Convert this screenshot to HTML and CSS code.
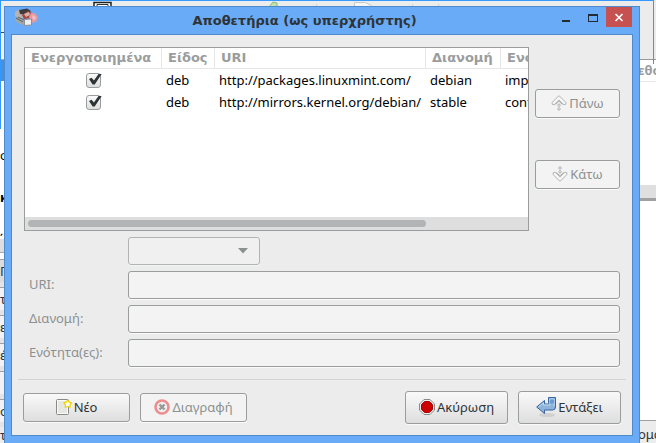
FILE: index.html
```html
<!DOCTYPE html>
<html lang="el">
<head>
<meta charset="utf-8">
<title>Αποθετήρια</title>
<link rel="stylesheet" href="styles.css">
</head>
<body>
<div class="backdrop" aria-hidden="true">
  <div class="back-left">
    <div class="bl-tools"></div>
    <div class="bl-line"></div>
    <div class="bl-selected"></div>
    <div class="bl-list"><span>ς</span><b>κ</b><span>΄</span></div>
    <div class="bl-scroll"></div>
    <div class="bl-tab bl-dark">Π</div>
    <div class="bl-tab">τ</div>
    <div class="bl-tab">ε</div>
    <div class="bl-tab">έ</div>
    <div class="bl-tab"></div>
    <div class="bl-tab">ο</div>
    <div class="bl-foot">τ</div>
  </div>
  <div class="back-right">
    <div class="br-tools"></div>
    <div class="br-head">εθο</div>
    <div class="br-list"></div>
    <div class="br-scroll"></div>
    <div class="br-text"></div>
    <div class="br-foot">ομά</div>
  </div>
  <svg class="back-icons" width="656" height="8" viewBox="0 0 656 8">
    <path d="M94 7V2.500h17V7" fill="#fff" stroke="#222" stroke-width="1.500"/>
    <path d="M97 6V4.500h11V6" fill="none" stroke="#333"/>
    <path d="M269 7l4-5 4 1v4z" fill="#bfe3ab" stroke="#8cba78"/>
    <path d="M354.500 7V2.500h11l6 3V7" fill="#f6f6f6" stroke="#c8c8c8"/>
    <path d="M316.500 4v3M438.500 4v3M412.500 4v3" stroke="#d4d4d4"/>
  </svg>
  <div class="back-frame"></div>
</div>

<main class="dialog">
  <header class="titlebar">
    <svg class="app-icon" width="26" height="20" viewBox="0 0 26 20">
      <defs><filter id="soft"><feGaussianBlur stdDeviation="0.6"/></filter></defs>
      <g filter="url(#soft)">
        <path d="M1 4l4-2.500 5 1.500 1 5-4 3-6-3z" fill="#b9b2ae"/>
        <path d="M5 2l8-1.500 4 2.500-4 4-7-1z" fill="#3e3b3d"/>
        <path d="M8 7l6-4 4 2-1 5-7 1z" fill="#a8453f"/>
        <path d="M10 6l5-2 1 3-4 2z" fill="#d8b2ac"/>
        <path d="M1 9l5 1 6 4-2 3-6-2-3-3z" fill="#a4a7a8"/>
        <path d="M2 10l7 4M4 9l6 3" stroke="#5e5f60"/>
        <path d="M17 5l4 0 3 4-2 5-5 1-2-6z" fill="#e39aa2"/>
        <path d="M18 7l3 1 1 3-3 1z" fill="#f3bfc4"/>
        <path d="M10.500 11.500l7-.5v6l-7 .5z" fill="#efefed" stroke="#8b9197"/>
      </g>
    </svg>
    <h1>Αποθετήρια (ως υπερχρήστης)</h1>
    <div class="win-buttons">
      <button type="button" aria-label="Ελαχιστοποίηση"><svg width="26" height="20" viewBox="0 0 26 20"><path d="M8 13h8v2H8z" fill="#222b30"/></svg></button>
      <button type="button" aria-label="Μεγιστοποίηση"><svg width="26" height="20" viewBox="0 0 26 20"><path d="M8 7h10v8H8zM9 9v5h8V9z" fill="#222b30" fill-rule="evenodd"/></svg></button>
      <button type="button" class="close" aria-label="Κλείσιμο"><svg width="26" height="20" viewBox="0 0 26 20"><path d="M9.500 7l7 7M16.500 7l-7 7" stroke="#fff" stroke-width="1.700"/></svg></button>
    </div>
  </header>

  <div class="content">
    <section class="sources">
      <div class="list-frame">
        <div class="list-view">
          <table>
            <thead><tr><th class="c-on">Ενεργοποιημένα</th><th class="c-kind">Είδος</th><th class="c-uri">URI</th><th class="c-dist">Διανομή</th><th class="c-sect">Ενότητα(ες)</th></tr></thead>
            <tbody>
              <tr><td class="center"><input type="checkbox" checked aria-label="packages.linuxmint.com"></td><td>deb</td><td>http://packages.linuxmint.com/</td><td>debian</td><td>import</td></tr>
              <tr><td class="center"><input type="checkbox" checked aria-label="mirrors.kernel.org"></td><td>deb</td><td>http://mirrors.kernel.org/debian/</td><td>stable</td><td>contrib</td></tr>
            </tbody>
          </table>
        </div>
        <div class="scrollbar"><div class="thumb"></div></div>
      </div>
      <div class="order">
        <button type="button" class="btn" disabled>
          <svg width="16" height="16" viewBox="0 0 16 16" fill="#f8f8f8" stroke="#b0b2b2"><path d="M8 .7l7 6.800q.5 2.500-2 2.300L8 5 3 9.800Q.5 10 1 7.500z"/><path d="M4.500 9.500L8 6.200l3.500 3.300" fill="none"/><circle cx="8" cy="10.200" r="1.200"/><circle cx="8" cy="14" r="1.200"/></svg>Πάνω</button>
        <button type="button" class="btn" disabled>
          <svg width="16" height="16" viewBox="0 0 16 16" fill="#f8f8f8" stroke="#b0b2b2"><path d="M8 15.300L1 8.500q-.5-2.500 2-2.300L8 11l5-4.800q2.500-.2 2 2.300z"/><path d="M4.500 6.500L8 9.800l3.500-3.300" fill="none"/><circle cx="8" cy="5.800" r="1.200"/><circle cx="8" cy="2" r="1.200"/></svg>Κάτω</button>
      </div>
    </section>

    <form class="fields">
      <span></span>
      <div class="combo">
        <select aria-label="Είδος" disabled><option></option></select>
        <svg width="10" height="6" viewBox="0 0 10 6"><path d="M0 0h10L5 5.500z" fill="#8b9191"/></svg>
      </div>
      <label for="uri">URI:</label><input id="uri" type="text" disabled>
      <label for="dist">Διανομή:</label><input id="dist" type="text" disabled>
      <label for="sect">Ενότητα(ες):</label><input id="sect" type="text" disabled>
    </form>

    <hr>

    <footer class="actions">
      <button type="button" class="btn wide">
        <svg width="16" height="16" viewBox="0 0 16 16"><rect x=".5" y=".5" width="12" height="15" rx="1" fill="#fafaf9" stroke="#888a85"/><path d="M2 2h9v12H2z" fill="#e6e7e3"/><path d="M11.700 1l1.400 2.100 2.400.7-1.500 2 .1 2.500-2.400-.8-2.400.8.1-2.500-1.500-2 2.400-.7z" fill="#fffef0" stroke="#edd400" stroke-width="1.200" stroke-linejoin="round"/></svg>Νέο</button>
      <button type="button" class="btn wide" disabled>
        <svg width="16" height="16" viewBox="0 0 16 16"><circle cx="8" cy="8" r="6.500" fill="#f2f0f0" stroke="#ee8d8d" stroke-width="2.600"/><path d="M5.500 5.500l5 5M10.500 5.500l-5 5" stroke="#979a99" stroke-width="2.400"/></svg>Διαγραφή</button>
      <span class="spacer"></span>
      <button type="button" class="btn tall">
        <svg width="16" height="16" viewBox="0 0 16 16"><path d="M5 .5h6L15.500 5v6L11 15.500H5L.5 11V5z" fill="#eee" stroke="#888a85"/><path d="M5.600 2.500h4.800L13.500 5.600v4.800L10.400 13.500H5.600L2.500 10.400V5.600z" fill="#c00" stroke="#a00"/></svg>Ακύρωση</button>
      <button type="button" class="btn tall">
        <svg width="20" height="20" viewBox="0 0 20 20"><ellipse cx="11" cy="18" rx="8" ry="2" fill="#d0d0d0"/><path d="M.7 10l7.800-6.500V7H13V5.500h-.5v-5h7V10q0 3-3 3h-8v3.500z" fill="#8fb4dc" stroke="#3465a4"/><path d="M2.500 10l5-4.200V8H14V2h4v7" fill="none" stroke="#c5daf0"/><path d="M14 2.500h4v4h-4z" fill="#6f9bcb"/></svg>Εντάξει</button>
    </footer>
  </div>
</main>
</body>
</html>
```
FILE: styles.css
```css
* { box-sizing: border-box; }

html, body { height: 100%; }

body {
  margin: 0;
  overflow: hidden;
  background: #fff;
  color: #2e3436;
  font: 13px/20px "Noto Sans", "Open Sans", sans-serif;
}

/* Main window behind the dialog */
.backdrop {
  position: absolute;
  inset: 0;
  display: flex;
  justify-content: space-between;
  overflow: hidden;
}

.backdrop::before {
  content: "";
  position: absolute;
  inset: 0 0 auto;
  height: 8px;
  background: #ececec;
}

.back-left {
  width: 12px;
  display: flex;
  flex-direction: column;
  overflow: hidden;
}

.back-left > div { flex-shrink: 0; }

.bl-tools { height: 32px; background: #ececec; }
.bl-line { height: 28px; border-top: 1px solid #444; border-bottom: 1px solid #aaa; background: #f2f2f2; }
.bl-selected { height: 21px; background: #4a90d9; }
.bl-list { height: 158px; padding-top: 64px; display: flex; flex-direction: column; gap: 22px; overflow: hidden; color: #000; }
.bl-scroll { height: 14px; background: #dedede; border-bottom: 1px solid #aaa; }
.bl-tab { height: 28px; border-top: 1px solid #a0a0a0; border-bottom: 5px solid #e4e4e4; background: #f2f2f2; line-height: 22px; }
.bl-dark { margin-top: 6px; background: #dcdcdc; }
.bl-foot { height: 16px; background: #ececec; line-height: 16px; }

.back-right {
  width: 18px;
  display: flex;
  flex-direction: column;
  overflow: hidden;
}

.br-tools { height: 60px; background: #ececec; border-bottom: 1px solid #999; }
.br-head { height: 22px; border-bottom: 1px solid #e6e6e6; color: #9a9d9d; font-weight: bold; }
.br-list { height: 103px; }
.br-scroll { height: 16px; background: #dfdfdf; border-bottom: 3px solid #a0a0a0; }
.br-text { flex: 1; }
.br-foot { height: 23px; border-top: 1px solid #a0a0a0; background: #ececec; line-height: 26px; }

.back-icons { position: absolute; left: 0; top: 0; }

.back-frame {
  position: absolute;
  inset: 0 2px auto 0;
  height: 64px;
  border: 1px solid #3399ff;
  border-bottom: 0;
}

.back-frame::after {
  content: "";
  position: absolute;
  left: -1px;
  top: 0;
  height: 128px;
  border-left: 1px solid #3399ff;
}

/* Dialog window */
.dialog {
  position: relative;
  margin: 0 16px 0 4px;
  top: 6px;
  padding: 0 6px 7px;
  border: 1px solid #4f8bcb;
  background: #6aabf7;
}

.titlebar {
  display: grid;
  grid-template-columns: 44px 1fr 78px;
  height: 27px;
  padding-right: 1px;
}

.app-icon { margin: 1px 0 0 3px; }

h1 {
  margin: 0;
  font: bold 13px/27px "DejaVu Sans", sans-serif;
  text-align: center;
  white-space: nowrap;
}

.win-buttons { display: flex; }
.win-buttons button { width: 26px; height: 20px; padding: 0; border: 0; background: none; }
.win-buttons svg { display: block; }
.win-buttons .close { background: #c75050; }

.content {
  border: 1px solid #4f8bcb;
  background: #ececec;
  padding: 12px 6px 11px;
}

.sources {
  display: grid;
  grid-template-columns: 1fr 85px;
  gap: 6px;
  padding: 0 6px;
}

.list-frame {
  min-width: 0;
  height: 184px;
  display: flex;
  flex-direction: column;
  border: 1px solid #9a9d9d;
  background: #fff;
}

.list-view { flex: 1; overflow: hidden; }

table { width: 610px; table-layout: fixed; border-collapse: separate; border-spacing: 0; color: #000; }
.c-on { width: 137px; }
.c-kind { width: 53px; }
.c-uri { width: 211px; }
.c-dist { width: 75px; }

th {
  height: 21px;
  padding: 0 6px;
  border-right: 1px solid #e6e6e6;
  border-bottom: 1px solid #e6e6e6;
  color: #9a9d9d;
  font: bold 13px/20px "DejaVu Sans", sans-serif;
  text-align: left;
  white-space: nowrap;
}

td { height: 22px; padding: 0 4px; line-height: 20px; white-space: nowrap; }
td.center { text-align: center; }

input[type="checkbox"] {
  appearance: none;
  display: block;
  width: 15px;
  height: 15px;
  margin: 0 auto;
  border: 1px solid #9a9d9d;
  border-radius: 3px;
  background: linear-gradient(#fafafa, #dedede);
  position: relative;
}

input[type="checkbox"]::after {
  content: "";
  position: absolute;
  left: 2px;
  top: 0;
  width: 13px;
  height: 11px;
  background: #2e3436;
  clip-path: polygon(0 50%, 20% 38%, 38% 64%, 76% 0, 100% 0, 44% 100%, 28% 100%);
}

.scrollbar { height: 13px; padding: 3px; background: #dedede; }
.thumb { width: 80%; height: 7px; border-radius: 4px; background: #b2b3b5; }

.order { display: flex; flex-direction: column; gap: 42px; padding-top: 42px; }

.btn {
  display: flex;
  align-items: center;
  justify-content: center;
  gap: 2px;
  height: 29px;
  padding: 0 0 2px;
  border: 1px solid #9a9d9d;
  border-radius: 3px;
  background: linear-gradient(#f9f9f9, #dedede);
  box-shadow: 0 1px #fafafa;
  color: #2e3436;
  font: inherit;
}

.btn:disabled { background: #f3f3f3; color: #8b9191; }

.fields {
  display: grid;
  grid-template-columns: 99px 1fr;
  row-gap: 6px;
  padding: 6px 6px 0 11px;
  color: #8b9191;
}

.fields label { line-height: 26px; }

.fields input, select {
  width: 100%;
  height: 28px;
  border: 1px solid #9a9d9d;
  border-radius: 3px;
  background: #f3f3f3;
  box-shadow: 0 1px #fafafa;
  font: inherit;
}

.combo { position: relative; width: 132px; height: 28px; }
select { appearance: none; display: block; }
.combo svg { position: absolute; right: 12px; top: 11px; }

hr { margin: 12px 0 11px; border: 0; border-top: 1px solid #d3d3d3; }

.actions { display: flex; align-items: center; gap: 10px; padding: 0 5px; }
.wide { width: 107px; }
.tall { width: 103px; height: 33px; }
.spacer { flex: 1; }
```
